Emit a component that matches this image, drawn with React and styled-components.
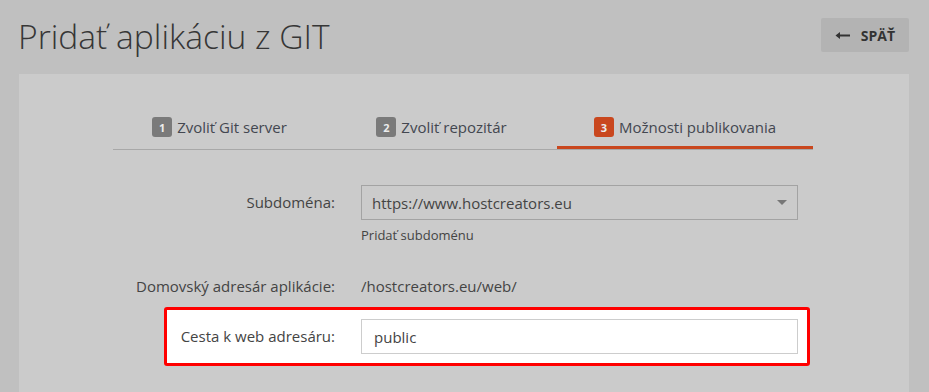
import styled, { createGlobalStyle } from "styled-components";

const GlobalStyle = createGlobalStyle`
  html, body {
    margin: 0;
    padding: 0;
    background: #c0c0c0;
    font-family: "Open Sans", "Liberation Sans", sans-serif;
    color: #444;
    overflow: hidden;
  }
`;

const Page = styled.div`
  height: 392px;
  overflow: hidden;
`;

const Header = styled.header`
  height: 74px;
  padding: 0 20px 0 18px;
  display: flex;
  justify-content: space-between;
  align-items: flex-start;
  box-sizing: border-box;
`;

const Title = styled.h1`
  margin: 15px 0 0;
  font-size: 33.6px;
  line-height: 43px;
  font-weight: 300;
  color: #363636;
`;

const BackButton = styled.button`
  margin-top: 18px;
  height: 34px;
  padding: 0 14px;
  display: flex;
  align-items: center;
  gap: 10px;
  border: none;
  border-radius: 2px;
  background: #b3b3b3;
  color: #333;
  font-family: inherit;
  font-size: 14px;
  font-weight: 700;
`;

const Panel = styled.main`
  margin: 0 20px 0 19px;
  padding: 43px 0 60px;
  background: #cbcbcb;
`;

const TabRow = styled.nav`
  width: 700px;
  margin-left: 94px;
  display: grid;
  grid-template-columns: 213px 231px 256px;
  border-bottom: 1px solid #a8a8a8;
`;

const Tab = styled.div`
  display: flex;
  justify-content: center;
  align-items: center;
  gap: 5px;
  height: 20px;
  padding-bottom: 9px;
  border-bottom: 3px solid ${(p) => (p.$active ? "#c9471e" : "transparent")};
  font-size: 15px;
  color: #434750;
`;

const Badge = styled.span`
  width: 20px;
  height: 20px;
  border-radius: 3px;
  background: ${(p) => (p.$active ? "#c9471e" : "#7a7a7a")};
  color: #ececec;
  font-size: 11px;
  font-weight: 700;
  display: flex;
  align-items: center;
  justify-content: center;
`;

const Form = styled.section`
  margin-top: 32px;
`;

const Row = styled.div`
  margin: ${(p) => p.$top}px 99px 0 ${(p) => (p.$highlight ? 145 : 94)}px;
  display: grid;
  grid-template-columns: 1fr 437px;
  column-gap: 26px;
  align-items: start;
  padding: ${(p) => (p.$highlight ? "9px 9px 9px 0" : "0 9px 0 0")};
  border: 3px solid ${(p) => (p.$highlight ? "#ff0000" : "transparent")};
  border-radius: 3px;
  background: ${(p) => (p.$highlight ? "#fff" : "transparent")};
`;

const Label = styled.label`
  text-align: right;
  font-size: 15px;
  line-height: 35px;
  color: #444;
  white-space: nowrap;
`;

const Select = styled.div`
  height: 35px;
  box-sizing: border-box;
  border: 1px solid #a3a3a3;
  padding: 0 10px;
  display: flex;
  align-items: center;
  justify-content: space-between;
  font-size: 15px;
  color: #444;
`;

const Caret = styled.span`
  width: 0;
  height: 0;
  border-left: 5px solid transparent;
  border-right: 5px solid transparent;
  border-top: 5px solid #777;
`;

const Hint = styled.div`
  margin-top: 6px;
  font-size: 13px;
  line-height: 18px;
  color: #444;
`;

const Value = styled.div`
  font-size: 15px;
  line-height: 35px;
  color: #444;
`;

const Input = styled.div`
  height: 35px;
  box-sizing: border-box;
  border: 1px solid #cdcdcd;
  background: #fff;
  padding: 0 12px;
  display: flex;
  align-items: center;
  font-size: 15px;
  color: #444;
`;

const ArrowLeft = () => (
  <svg width="16" height="9" viewBox="0 0 16 9">
    <path d="M2 4.5H15" stroke="#333" strokeWidth="2" fill="none" />
    <path d="M0.5 4.5L5 1V8Z" fill="#333" />
  </svg>
);

const steps = [
  { n: 1, label: "Zvoliť Git server" },
  { n: 2, label: "Zvoliť repozitár" },
  { n: 3, label: "Možnosti publikovania", active: true },
];

export default function App() {
  return (
    <Page>
      <GlobalStyle />
      <Header>
        <Title>Pridať aplikáciu z GIT</Title>
        <BackButton>
          <ArrowLeft />
          SPÄŤ
        </BackButton>
      </Header>
      <Panel>
        <TabRow>
          {steps.map((s) => (
            <Tab key={s.n} $active={s.active}>
              <Badge $active={s.active}>{s.n}</Badge>
              {s.label}
            </Tab>
          ))}
        </TabRow>
        <Form>
          <Row $top={0}>
            <Label>Subdoména:</Label>
            <div>
              <Select>
                https://www.hostcreators.eu
                <Caret />
              </Select>
              <Hint>Pridať subdoménu</Hint>
            </div>
          </Row>
          <Row $top={19}>
            <Label>Domovský adresár aplikácie:</Label>
            <Value>/hostcreators.eu/web/</Value>
          </Row>
          <Row $top={0} $highlight>
            <Label>Cesta k web adresáru:</Label>
            <Input>public</Input>
          </Row>
        </Form>
      </Panel>
    </Page>
  );
}
